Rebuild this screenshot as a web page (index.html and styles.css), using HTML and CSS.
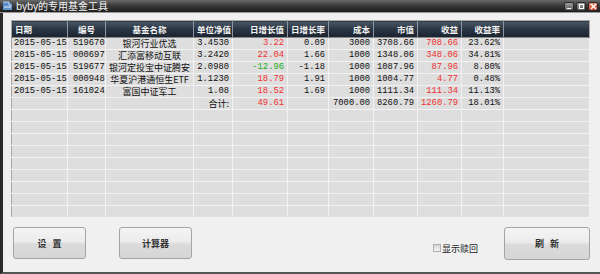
FILE: index.html
```html
<!DOCTYPE html>
<html lang="zh-CN">
<head>
    <meta charset="UTF-8">
    <title>byby的专用基金工具</title>
    <link rel="stylesheet" href="styles.css">
</head>
<body>
    <div class="window">
        <div class="titlebar">
            <svg class="app-icon" width="11" height="10" viewBox="0 0 11 10">
                <path d="M1 1 L7 1 L10 4 L10 9 L1 9 Z" fill="#5a8fc8"/>
                <path d="M1 1 L7 1 L7 4 L10 4" fill="none" stroke="#bcd6f0" stroke-width="1"/>
                <path d="M2 6 L9 6" stroke="#e8f0fa" stroke-width="1"/>
            </svg>
            <span class="title">byby的专用基金工具</span>
            <div class="win-btns">
                <span class="win-btn min"></span>
                <span class="win-btn max"></span>
                <span class="win-btn close">
                    <svg width="7" height="7" viewBox="0 0 7 7"><path d="M1 1 L6 6 M6 1 L1 6" stroke="#fff" stroke-width="1.4"/></svg>
                </span>
            </div>
        </div>

        <div class="content">
            <table class="grid">
                <thead>
                    <tr>
                        <th class="c-date left">日期</th>
                        <th class="c-code center">编号</th>
                        <th class="c-name center">基金名称</th>
                        <th class="c-nav">单位净值</th>
                        <th class="c-dv">日增长值</th>
                        <th class="c-dr">日增长率</th>
                        <th class="c-cost">成本</th>
                        <th class="c-mv">市值</th>
                        <th class="c-gain">收益</th>
                        <th class="c-rate">收益率</th>
                        <th class="c-rest"></th>
                    </tr>
                </thead>
                <tbody id="rows"></tbody>
            </table>
        </div>

        <div class="footer">
            <button class="btn">设&nbsp;&nbsp;&nbsp;置</button>
            <button class="btn calc">计算器</button>
            <label class="check"><span class="box"></span>显示赎回</label>
            <button class="btn refresh">刷&nbsp;&nbsp;&nbsp;新</button>
        </div>
    </div>

    <script>
        const funds = [
            ['2015-05-15', '519670', '银河行业优选', '3.4530', '3.22', '0.09', '3000', '3708.66', '708.66', '23.62%'],
            ['2015-05-15', '000697', '汇添富移动互联', '3.2420', '22.04', '1.66', '1000', '1348.06', '348.06', '34.81%'],
            ['2015-05-15', '519677', '银河定投宝中证腾安', '2.0980', '-12.96', '-1.18', '1000', '1087.96', '87.96', '8.80%'],
            ['2015-05-15', '000948', '华夏沪港通恒生ETF', '1.1230', '18.79', '1.91', '1000', '1004.77', '4.77', '0.48%'],
            ['2015-05-15', '161024', '富国中证军工', '1.08', '18.52', '1.69', '1000', '1111.34', '111.34', '11.13%'],
            ['', '', '', '合计:', '49.61', '', '7000.00', '8260.79', '1260.79', '18.01%']
        ];
        const aligns = ['left', 'code', 'center', '', '', '', '', '', '', ''];
        const tbody = document.getElementById('rows');

        for (let i = 0; i < 15; i++) {
            const tr = document.createElement('tr');
            const data = funds[i] || [];
            for (let c = 0; c < 11; c++) {
                const td = document.createElement('td');
                const val = data[c] || '';
                td.textContent = val;
                if (aligns[c]) td.classList.add(aligns[c]);
                if (c === 2 || (c === 3 && val === '合计:')) td.classList.add('cjk');
                // day change and gain columns are coloured
                if ((c === 4 || c === 8) && val) {
                    td.classList.add(val.startsWith('-') ? 'down' : 'up');
                }
                tr.appendChild(td);
            }
            tbody.appendChild(tr);
        }
    </script>
</body>
</html>
```

FILE: styles.css
```css
html, body {
    margin: 0;
    padding: 0;
    width: 600px;
    height: 274px;
    overflow: hidden;
}

.window {
    width: 600px;
    height: 274px;
    box-sizing: border-box;
    background: #f0f0f0;
    border-left: 3px solid #2a2a2a;
    border-bottom: 2px solid #555;
    display: flex;
    flex-direction: column;
    font-family: "Liberation Mono", "Noto Sans CJK SC", monospace;
}

.titlebar {
    height: 12px;
    background: linear-gradient(#6a6a6a, #3a3a3a 45%, #1e1e1e);
    border-bottom: 1px solid #9a9a9a;
    display: flex;
    align-items: center;
    margin-left: -3px;
    padding-left: 2px;
}

.app-icon {
    margin-right: 3px;
}

.title {
    color: #f4f4f4;
    font-family: "Noto Sans", "Noto Sans CJK SC", sans-serif;
    font-size: 10px;
    line-height: 12px;
}

.win-btns {
    margin-left: auto;
    display: flex;
    gap: 2px;
    padding-right: 2px;
}

.win-btn {
    width: 8px;
    height: 7px;
    border: 1px solid #2c2c2c;
    border-radius: 2px;
    background: linear-gradient(#9a9a9a, #5e5e5e);
    position: relative;
}

.win-btn.min::after {
    content: "";
    position: absolute;
    left: 2px;
    right: 2px;
    bottom: 1px;
    height: 1px;
    background: #fff;
}

.win-btn.max::after {
    content: "";
    position: absolute;
    left: 2px;
    top: 1px;
    width: 3px;
    height: 3px;
    border: 1px solid #fff;
}

.win-btn.close {
    background: linear-gradient(#f08a70, #d0442a);
    display: flex;
    align-items: center;
    justify-content: center;
}

.content {
    padding: 7px 10px 0 8px;
}

.grid {
    border-collapse: collapse;
    width: 579px;
    table-layout: fixed;
    border: 1px solid #a8a8a8;
    background: #dedede;
    font-size: 8.8px;
}

.grid th,
.grid td {
    box-sizing: border-box;
}

.grid th {
    height: 17px;
    padding: 0 3px;
    background: linear-gradient(#4a5664, #2a3543 50%, #1a2330);
    color: #f2f2f2;
    font-family: "Noto Sans CJK SC", sans-serif;
    font-weight: bold;
    font-size: 8.5px;
    text-align: right;
    border-left: 1px solid #8a96a4;
    border-bottom: 1px solid #8a8a8a;
    white-space: nowrap;
    overflow: hidden;
}

.grid td {
    height: 12px;
    padding: 0 3px 0 2px;
    line-height: 11px;
    text-align: right;
    color: #111;
    border: 1px solid #f2f2f2;
    border-top: none;
    white-space: nowrap;
    overflow: hidden;
}

.grid tr > :first-child {
    border-left: none;
}

.grid .left { text-align: left; }
.grid .center { text-align: center; padding: 0; }
.grid .code { text-align: left; padding-left: 5px; }
.grid .cjk { font-family: "Noto Sans CJK SC", sans-serif; font-size: 9px; }

.up { color: #f03030 !important; }
.down { color: #20b020 !important; }

.c-date { width: 56px; }
.c-code { width: 38px; }
.c-name { width: 88px; }
.c-nav { width: 39px; }
.c-dv { width: 55px; }
.c-dr { width: 41px; }
.c-cost { width: 45px; }
.c-mv { width: 44px; }
.c-gain { width: 44px; }
.c-rate { width: 42px; }

.footer {
    display: flex;
    align-items: center;
    padding: 8px 10px 0 10px;
    height: 34px;
}

.btn {
    width: 73px;
    height: 32px;
    border: 1px solid #a4a4a4;
    border-radius: 3px;
    background: linear-gradient(#f4f4f4, #ececec 45%, #dadada 55%, #d6d6d6);
    font-family: "Noto Sans CJK SC", sans-serif;
    font-size: 9px;
    font-weight: bold;
    color: #333;
    padding: 0;
}

.btn.calc {
    margin-left: 33px;
}

.check {
    margin-left: auto;
    margin-top: 10px;
    margin-right: 26px;
    display: flex;
    align-items: center;
    gap: 1px;
    font-family: "Noto Sans CJK SC", sans-serif;
    font-size: 9px;
    color: #222;
}

.check .box {
    width: 6px;
    height: 6px;
    border: 1px solid #b0b0b0;
    background: linear-gradient(#d4d4d4, #f4f4f4);
}

.btn.refresh {
    width: 86px;
    height: 33px;
}
```
